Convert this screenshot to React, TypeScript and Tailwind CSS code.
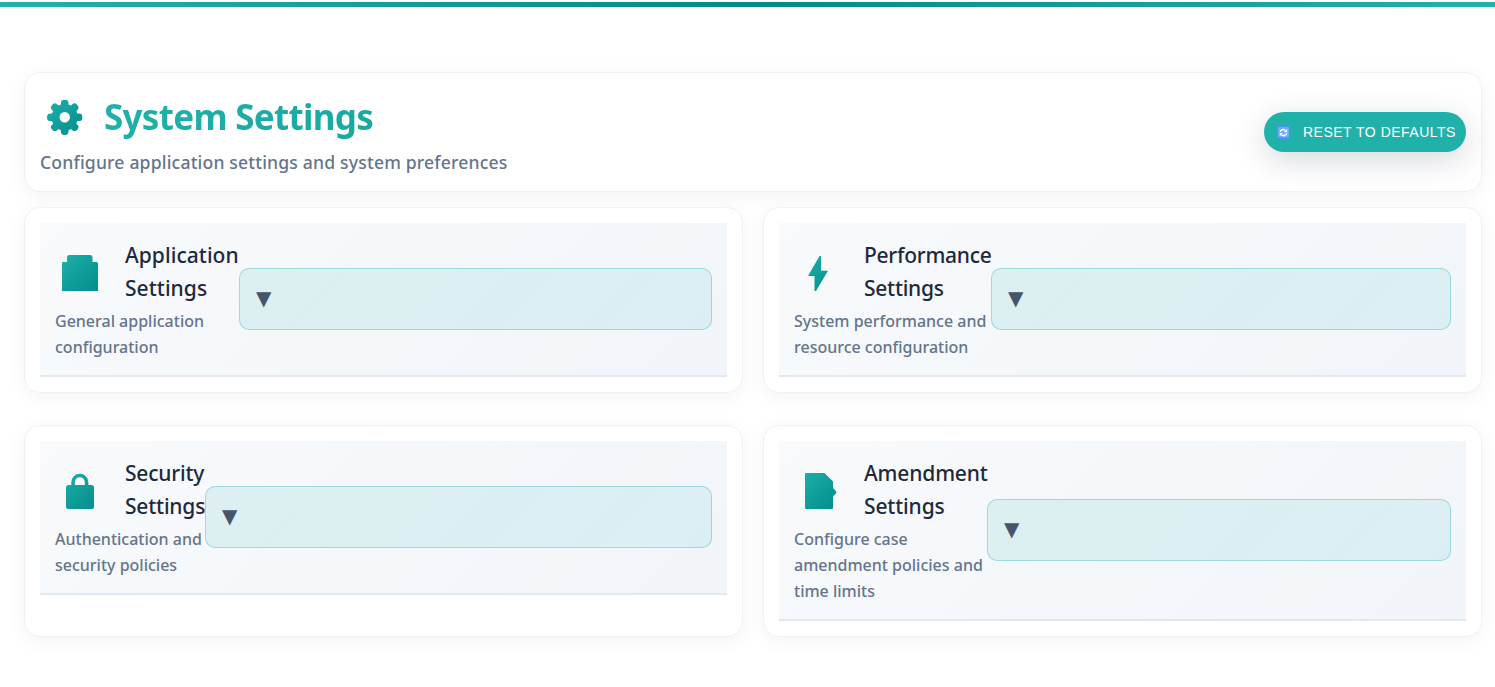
import type { ReactNode } from "react";

function IconGradient({ id }: { id: string }) {
  return (
    <linearGradient id={id} gradientUnits="userSpaceOnUse" x1="5" y1="5" x2="45" y2="45">
      <stop offset="0" stopColor="#20b2aa" />
      <stop offset="1" stopColor="#008b8b" />
    </linearGradient>
  );
}

function IconFrame({ id, children }: { id: string; children: ReactNode }) {
  return (
    <svg className="mt-px h-[50px] w-[50px] shrink-0" viewBox="0 0 50 50">
      <defs>
        <IconGradient id={id} />
      </defs>
      {children}
    </svg>
  );
}

function GearIcon() {
  return (
    <svg className="h-[50px] w-[50px] shrink-0" viewBox="0 0 50 50">
      <defs>
        <IconGradient id="gear" />
        <mask id="gear-shape" maskUnits="userSpaceOnUse" x="0" y="0" width="50" height="50">
          <circle cx="24.7" cy="25.300" r="13.2" fill="white" />
          {[0, 45, 90, 135].map((angle) => (
            <rect
              key={angle}
              x="20.9"
              y="7.7"
              width="7.6"
              height="35.2"
              rx="3.4"
              fill="white"
              transform={`rotate(${angle} 24.7 25.3)`}
            />
          ))}
          <circle cx="24.7" cy="25.300" r="5.2" fill="black" />
        </mask>
      </defs>
      <rect width="50" height="50" fill="url(#gear)" mask="url(#gear-shape)" />
    </svg>
  );
}

const applicationIcon = (
  <IconFrame id="app">
    <path
      fill="url(#app)"
      d="M7 43V15.2Q7 14 8.200 14H12V9.500Q12 7 14.500 7H35Q37.500 7 37.500 9.500V14H41.500Q43 14 43 15.500V43Z"
    />
  </IconFrame>
);

const performanceIcon = (
  <IconFrame id="perf">
    <path fill="url(#perf)" d="M25.500 8H27V22.800H34L22 43H20.500V28H14Z" />
  </IconFrame>
);

const securityIcon = (
  <IconFrame id="lock">
    <path
      fill="url(#lock)"
      fillRule="evenodd"
      d="M13.500 19H16.300V16.300a8.500 8.500 0 0 1 17 0V19H36.500a2.500 2.500 0 0 1 2.500 2.500V40.500a2.500 2.500 0 0 1-2.500 2.500H13.500a2.500 2.500 0 0 1-2.500-2.500V21.500a2.500 2.500 0 0 1 2.500-2.500ZM19.800 19H29.800V16.300a5 5 0 0 0-10 0Z"
    />
  </IconFrame>
);

const amendmentIcon = (
  <IconFrame id="doc">
    <path
      fill="url(#doc)"
      d="M11 8Q11 7 12 7H30.500L39 15.500V22L42.200 25.500V27.300L39 30.500V42Q39 43 38 43H12Q11 43 11 42Z"
    />
  </IconFrame>
);

type Section = {
  title: string[];
  titleClass: string;
  lines: string[];
  icon: ReactNode;
  textClass: string;
};

const sections: Section[] = [
  {
    title: ["Application", "Settings"],
    titleClass: "tracking-[0.05px]",
    lines: ["General application", "configuration"],
    icon: applicationIcon,
    textClass: "w-[184px]",
  },
  {
    title: ["Performance", "Settings"],
    titleClass: "tracking-[-0.25px]",
    lines: ["System performance and", "resource configuration"],
    icon: performanceIcon,
    textClass: "w-[197px]",
  },
  {
    title: ["Security", "Settings"],
    titleClass: "tracking-[-0.2px]",
    lines: ["Authentication and", "security policies"],
    icon: securityIcon,
    textClass: "w-[150px]",
  },
  {
    title: ["Amendment", "Settings"],
    titleClass: "tracking-[-0.15px]",
    lines: ["Configure case", "amendment policies and", "time limits"],
    icon: amendmentIcon,
    textClass: "w-[193px]",
  },
];

function SectionCard({ section }: { section: Section }) {
  return (
    <section className="rounded-2xl border border-[#f0f2f6] bg-white p-[15px] shadow-[0_4px_20px_rgba(0,0,0,0.05)]">
      <div className="flex items-center border-b-2 border-[#e2e8f0] bg-linear-135 from-[#f8fafc] to-[#f1f5f9] p-[15px]">
        <div className={`shrink-0 whitespace-nowrap ${section.textClass}`}>
          <div className="flex items-center gap-5 pt-[1.2px]">
            {section.icon}
            <h2 className={`text-[21px] leading-[33.3px] font-medium text-[#1e293b] ${section.titleClass}`}>
              {section.title.map((line) => (
                <span key={line} className="block">
                  {line}
                </span>
              ))}
            </h2>
          </div>
          <p className="-mb-[0.6px] mt-[3.6px] text-[16px] leading-[25.6px] font-medium text-[#64748b]">
            {section.lines.map((line) => (
              <span key={line} className="block">
                {line}
              </span>
            ))}
          </p>
        </div>
        <button className="flex h-[62px] grow items-center rounded-[10px] border border-[#20b2aa]/35 bg-linear-135 from-[#20b2aa]/12 to-[#20b2c8]/10 px-4 pb-[2px] text-left font-['DejaVu_Sans',sans-serif] text-[20px] leading-none text-[#475569]">
          ▼
        </button>
      </div>
    </section>
  );
}

export default function App() {
  return (
    <div className="h-[687px] overflow-hidden bg-white pt-0.5 font-['Noto_Sans',sans-serif]">
      <div className="h-[5px] bg-linear-to-r from-[#20b2aa] via-[#008b8b] to-[#20b2aa]" />
      <main className="pt-[65px] pr-[13px] pl-6">
        <header className="flex h-[120px] items-center justify-between rounded-2xl border border-[#f0f2f6] bg-white px-[15px] shadow-[0_4px_20px_rgba(0,0,0,0.05)]">
          <div className="whitespace-nowrap">
            <div className="flex h-[58px] items-center gap-[14px]">
              <GearIcon />
              <h1 className="w-[1140px] bg-linear-135 from-[#20b2aa] to-[#008b8b] bg-clip-text text-[35px] leading-[58px] font-bold tracking-[-0.7px] text-transparent">
                System Settings
              </h1>
            </div>
            <p className="mt-0.5 text-[17.6px] leading-[28px] font-medium tracking-[0.17px] text-[#64748b]">
              Configure application settings and system preferences
            </p>
          </div>
          <button className="-ml-[200px] flex h-10 w-[202px] shrink-0 items-center rounded-full bg-[#20b2aa] pl-[13px] font-['Liberation_Sans',Arial,sans-serif] text-[14px] tracking-[0.5px] whitespace-nowrap text-white shadow-[0_8px_32px_rgba(30,41,80,0.18)]">
            <svg className="mt-px mr-[13px] h-[13px] w-[13px] shrink-0" viewBox="0 0 13 13">
              <rect width="13" height="13" rx="1" fill="#4893f3" />
              <rect x="1" y="1" width="11" height="10.500" rx="1" fill="#6aacfb" />
              <path
                d="M3.300 6C3.300 3.800 6.500 2.700 8.500 4.500M9.700 7.200C9.700 9.400 6.500 10.500 4.500 8.700"
                fill="none"
                stroke="white"
                strokeWidth="1.500"
              />
              <path d="M10.200 3V6.200H7ZM2.800 10.200V7H6Z" fill="white" />
            </svg>
            RESET TO DEFAULTS
          </button>
        </header>
        <div className="mt-[15px] grid grid-cols-2 gap-x-5 gap-y-8">
          {sections.map((section) => (
            <SectionCard key={section.title[0]} section={section} />
          ))}
        </div>
      </main>
    </div>
  );
}
